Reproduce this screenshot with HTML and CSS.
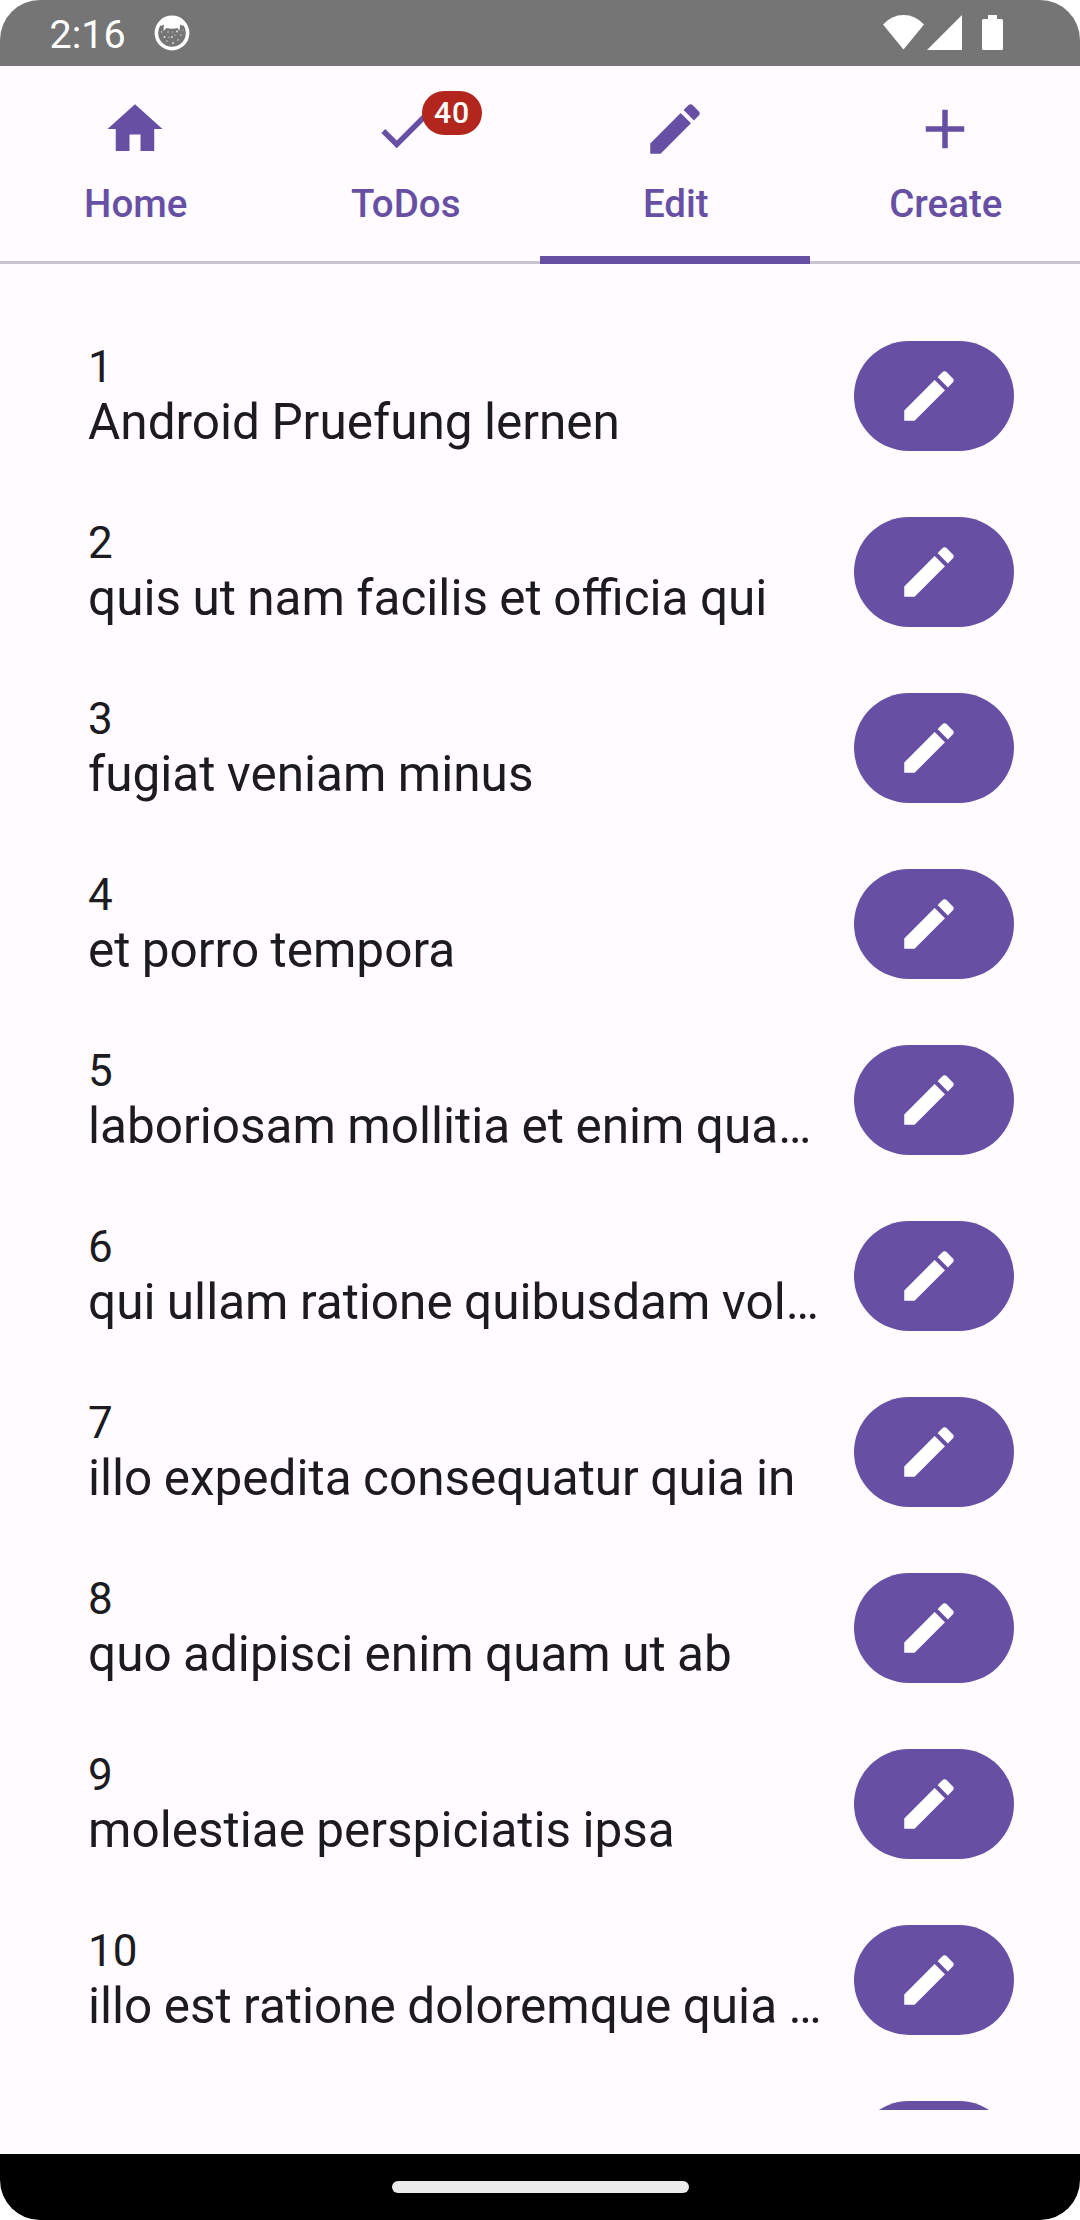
FILE: index.html
```html
<!DOCTYPE html>
<html lang="en">
<head>
<meta charset="utf-8">
<title>ToDos</title>
<link rel="stylesheet" href="styles.css">
</head>
<body>
<svg width="0" height="0" class="defs">
  <symbol id="pencil" viewBox="0 0 24 24"><path d="M3 17.25V21h3.75L17.81 9.94l-3.75-3.75L3 17.25zM20.71 7.04c.39-.39.39-1.02 0-1.41l-2.34-2.34c-.39-.39-1.02-.39-1.41 0l-1.83 1.83 3.75 3.75 1.83-1.83z"/></symbol>
</svg>
<div class="screen">
  <header class="status">
    <span class="time">2:16</span>
    <svg class="cat" viewBox="0 0 36 36">
      <circle cx="18" cy="18" r="15.6" fill="none" stroke="#fff" stroke-width="3.6"/>
      <path d="M6 8Q18-2 30 8L29 11L26 9.500Q26 12 25.500 16L23.500 13Q18 14.500 12.500 13L9.500 16Q9.500 12 10 9.500L7 11Z" fill="#fff"/>
      <g fill="#fff" opacity=".8"><circle cx="10.500" cy="22" r="1"/><circle cx="18" cy="22" r=".9"/><circle cx="23" cy="16.500" r="1"/><circle cx="27" cy="20" r=".7"/><circle cx="14" cy="17" r=".7"/><circle cx="19" cy="28" r=".9"/><circle cx="13" cy="26" r=".7"/><circle cx="24" cy="25" r=".8"/><circle cx="7.500" cy="17" r=".7"/><circle cx="29" cy="15" r=".6"/><circle cx="18.500" cy="17" r=".6"/><circle cx="21" cy="20" r=".6"/><circle cx="15" cy="22.500" r=".6"/></g>
    </svg>
    <svg class="signals" viewBox="0 0 122 36">
      <g fill="#fff"><path d="M0 9.500Q8.500 0 20.500 0T41 9.500L20.500 34.500Z"/><path d="M44 35L79 0V35Z"/><path d="M105 0h9v4h4.500a1.500 1.500 0 0 1 1.500 1.500v28a1.500 1.500 0 0 1-1.500 1.500h-18a1.500 1.500 0 0 1-1.500-1.500v-28a1.500 1.500 0 0 1 1.500-1.500h4.500z"/></g>
    </svg>
  </header>
  <nav class="tabs">
    <a class="tab"><span class="icon"><svg viewBox="0 0 24 24"><path d="M10 20v-6h4v6h5v-8h3L12 3 2 12h3v8z"/></svg></span>Home</a>
    <a class="tab"><span class="icon"><svg viewBox="0 0 24 24"><path d="M9 16.17L4.830 12l-1.420 1.410L9 19 21 7l-1.410-1.410z"/></svg><b class="badge">40</b></span>ToDos</a>
    <a class="tab active"><span class="icon"><svg><use href="#pencil"/></svg></span>Edit</a>
    <a class="tab"><span class="icon"><svg viewBox="0 0 24 24"><path d="M19 13h-6v6h-2v-6H5v-2h6V5h2v6h6v2z"/></svg></span>Create</a>
  </nav>
  <main class="list">
    <div class="row"><div class="text"><div class="num">1</div><div class="title">Android Pruefung lernen</div></div><button class="edit"><svg><use href="#pencil"/></svg></button></div>
    <div class="row"><div class="text"><div class="num">2</div><div class="title">quis ut nam facilis et officia qui</div></div><button class="edit"><svg><use href="#pencil"/></svg></button></div>
    <div class="row"><div class="text"><div class="num">3</div><div class="title">fugiat veniam minus</div></div><button class="edit"><svg><use href="#pencil"/></svg></button></div>
    <div class="row"><div class="text"><div class="num">4</div><div class="title">et porro tempora</div></div><button class="edit"><svg><use href="#pencil"/></svg></button></div>
    <div class="row"><div class="text"><div class="num">5</div><div class="title">laboriosam mollitia et enim qua…</div></div><button class="edit"><svg><use href="#pencil"/></svg></button></div>
    <div class="row"><div class="text"><div class="num">6</div><div class="title">qui ullam ratione quibusdam vol…</div></div><button class="edit"><svg><use href="#pencil"/></svg></button></div>
    <div class="row"><div class="text"><div class="num">7</div><div class="title">illo expedita consequatur quia in</div></div><button class="edit"><svg><use href="#pencil"/></svg></button></div>
    <div class="row"><div class="text"><div class="num">8</div><div class="title">quo adipisci enim quam ut ab</div></div><button class="edit"><svg><use href="#pencil"/></svg></button></div>
    <div class="row"><div class="text"><div class="num">9</div><div class="title">molestiae perspiciatis ipsa</div></div><button class="edit"><svg><use href="#pencil"/></svg></button></div>
    <div class="row"><div class="text"><div class="num">10</div><div class="title">illo est ratione doloremque quia …</div></div><button class="edit"><svg><use href="#pencil"/></svg></button></div>
    <div class="row"><div class="text"></div><button class="edit"><svg><use href="#pencil"/></svg></button></div>
  </main>
  <footer class="navbar"><div class="pill"></div></footer>
</div>
</body>
</html>
```
FILE: styles.css
```css
* { box-sizing: border-box; }
body { margin: 0; background: #fff; font-family: Roboto, sans-serif; }
.defs { display: block; height: 0; }
.screen {
  width: 1080px;
  height: 2220px;
  display: flex;
  flex-direction: column;
  overflow: hidden;
  border-radius: 40px;
  background: #fffbff;
  color: #1c1b1f;
}
.status {
  height: 66px;
  flex: none;
  display: flex;
  align-items: flex-start;
  background: #757575;
  color: #fff;
  padding: 15px 75px 0 49.5px;
}
.time { font-size: 39.5px; line-height: 40px; width: 104px; }
.cat { width: 36px; height: 36px; }
.signals { width: 122px; height: 36px; margin-left: auto; }

.tabs {
  height: 198px;
  flex: none;
  display: grid;
  grid-template-columns: repeat(4, 1fr);
  box-shadow: inset 0 -3px #cac4d0;
}
.tab {
  display: flex;
  flex-direction: column;
  align-items: center;
  padding-top: 30px;
  color: #6750a4;
  font-size: 38.5px;
  font-weight: 500;
  line-height: 55px;
  text-indent: 1.5px;
}
.tab.active { border-bottom: 8px solid #6750a4; }
.icon { position: relative; height: 66px; margin-bottom: 14px; text-indent: 0; }
.icon svg, .edit svg { display: block; width: 66px; height: 66px; fill: currentColor; }
.badge {
  position: absolute;
  left: 50px;
  top: -5px;
  width: 60px;
  height: 44px;
  border-radius: 22px;
  background: #b3261e;
  color: #fff;
  font-size: 30.25px;
  font-weight: 500;
  line-height: 43px;
  letter-spacing: .7px;
  text-align: center;
}

.list { height: 1846px; flex: none; padding-top: 44px; overflow: hidden; }
.row {
  height: 176px;
  display: flex;
  align-items: center;
  padding: 0 66px 0 88px;
}
.text { flex: 1; min-width: 0; white-space: nowrap; }
.num { font-size: 44px; line-height: 52px; }
.title { font-size: 49.5px; line-height: 58px; word-spacing: -.9px; }
.edit {
  width: 160px;
  height: 110px;
  flex: none;
  border: 0;
  border-radius: 55px;
  padding: 0 0 0 41.75px;
  background: #6750a4;
  color: #fff;
}
.navbar {
  height: 66px;
  margin-top: auto;
  flex: none;
  display: flex;
  align-items: center;
  justify-content: center;
  background: #000;
}
.pill { width: 297px; height: 12px; border-radius: 6px; background: #ebebeb; }
```
